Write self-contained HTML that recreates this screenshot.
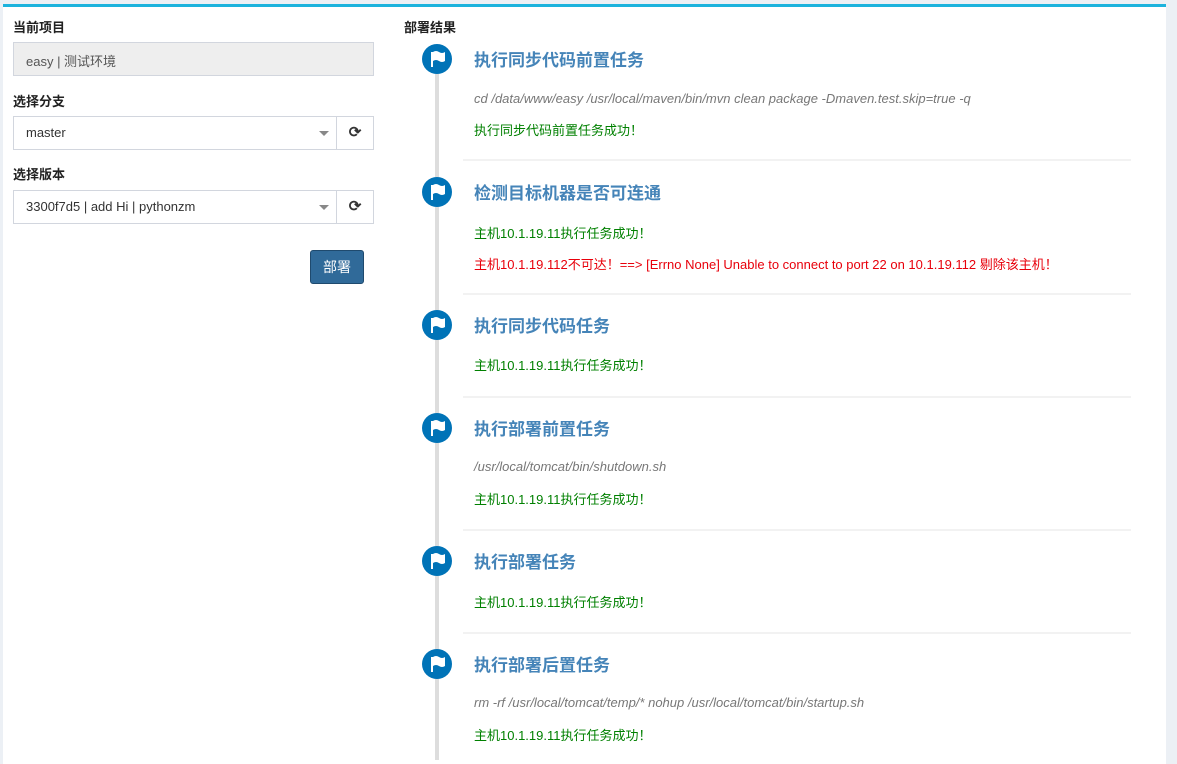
<!DOCTYPE html>
<html><head><meta charset="utf-8"><style>
*{box-sizing:border-box;margin:0;padding:0}
body{width:1177px;height:743px;background:#ecf0f5;font-family:"Liberation Sans","Noto Sans CJK SC",sans-serif;font-size:13px;color:#333;position:relative;overflow:hidden}
.card{position:absolute;left:3px;top:4px;width:1163px;height:760px;background:#fff;border-top:3px solid #1cb3dd}
.a{position:absolute;white-space:nowrap}
.lbl{font-weight:bold;font-size:13px;color:#222}
.box{position:absolute;border:1px solid #d2d6de;background:#fff}
.caret{position:absolute;width:0;height:0;border-left:5px solid transparent;border-right:5px solid transparent;border-top:5px solid #888}
.line{position:absolute;left:435px;top:60px;width:4px;height:700px;background:#ddd}
.dot{position:absolute;left:422px;width:30px;height:30px;border-radius:50%;background:#0073b7}
.t{position:absolute;left:474px;font-size:17px;font-weight:bold;color:#4584b8;white-space:nowrap}
.c{position:absolute;left:474px;font-style:italic;color:#777;white-space:nowrap}
.g{position:absolute;left:474px;color:#008000;white-space:nowrap}
.r{position:absolute;left:474px;color:#e8000b;white-space:nowrap}
.hr{position:absolute;left:463px;width:668px;height:2px;background:#f2f2f2}
</style></head><body>
<div class="card"></div>
<div class="a lbl" style="left:13px;top:17px">当前项目</div>
<div class="box" style="left:13px;top:42px;width:361px;height:34px;background:#eee"></div>
<div class="a" style="left:26px;top:51px;color:#555">easy | 测试环境</div>
<div class="a lbl" style="left:13px;top:91px">选择分支</div>
<div class="box" style="left:13px;top:116px;width:324px;height:34px"></div>
<div class="a" style="left:26px;top:125px">master</div>
<div class="caret" style="left:319px;top:131px"></div>
<div class="box" style="left:336px;top:116px;width:38px;height:34px;text-align:center;line-height:32px;font-size:15px;font-weight:bold">⟳</div>
<div class="a lbl" style="left:13px;top:164px">选择版本</div>
<div class="box" style="left:13px;top:190px;width:324px;height:34px"></div>
<div class="a" style="left:26px;top:199px">3300f7d5 | add Hi | pythonzm</div>
<div class="caret" style="left:319px;top:205px"></div>
<div class="box" style="left:336px;top:190px;width:38px;height:34px;text-align:center;line-height:32px;font-size:15px;font-weight:bold">⟳</div>
<div class="a" style="left:310px;top:250px;width:54px;height:34px;background:#306a99;border:1px solid #1f4a6e;border-radius:3px;color:#fff;font-size:14px;text-align:center;line-height:32px">部署</div>

<div class="a lbl" style="left:404px;top:17px">部署结果</div>
<div class="line"></div>

<div class="dot" style="top:44px"></div>
<div class="t" style="top:46px">执行同步代码前置任务</div>
<div class="c" style="top:91px">cd /data/www/easy /usr/local/maven/bin/mvn clean package -Dmaven.test.skip=true -q</div>
<div class="g" style="top:120px">执行同步代码前置任务成功！</div>
<div class="hr" style="top:159px"></div>

<div class="dot" style="top:177px"></div>
<div class="t" style="top:179px">检测目标机器是否可连通</div>
<div class="g" style="top:223px">主机10.1.19.11执行任务成功！</div>
<div class="r" style="top:254px">主机10.1.19.112不可达！==> [Errno None] Unable to connect to port 22 on 10.1.19.112 剔除该主机！</div>
<div class="hr" style="top:293px"></div>

<div class="dot" style="top:310px"></div>
<div class="t" style="top:312px">执行同步代码任务</div>
<div class="g" style="top:355px">主机10.1.19.11执行任务成功！</div>
<div class="hr" style="top:396px"></div>

<div class="dot" style="top:413px"></div>
<div class="t" style="top:415px">执行部署前置任务</div>
<div class="c" style="top:459px">/usr/local/tomcat/bin/shutdown.sh</div>
<div class="g" style="top:489px">主机10.1.19.11执行任务成功！</div>
<div class="hr" style="top:529px"></div>

<div class="dot" style="top:546px"></div>
<div class="t" style="top:548px">执行部署任务</div>
<div class="g" style="top:592px">主机10.1.19.11执行任务成功！</div>
<div class="hr" style="top:632px"></div>

<div class="dot" style="top:649px"></div>
<div class="t" style="top:651px">执行部署后置任务</div>
<div class="c" style="top:695px">rm -rf /usr/local/tomcat/temp/* nohup /usr/local/tomcat/bin/startup.sh</div>
<div class="g" style="top:725px">主机10.1.19.11执行任务成功！</div>

<svg style="position:absolute;left:0;top:0" width="1177" height="743">
<g fill="#fff">
<path id="f" d="M431 52 v15 h2 v-6 q3 -2 6 0 t6 0 v-9 q-3 2 -6 0 t-6 0 z"/>
<use href="#f" y="133"/><use href="#f" y="266"/><use href="#f" y="369"/><use href="#f" y="502"/><use href="#f" y="605"/>
</g></svg>
</body></html>
